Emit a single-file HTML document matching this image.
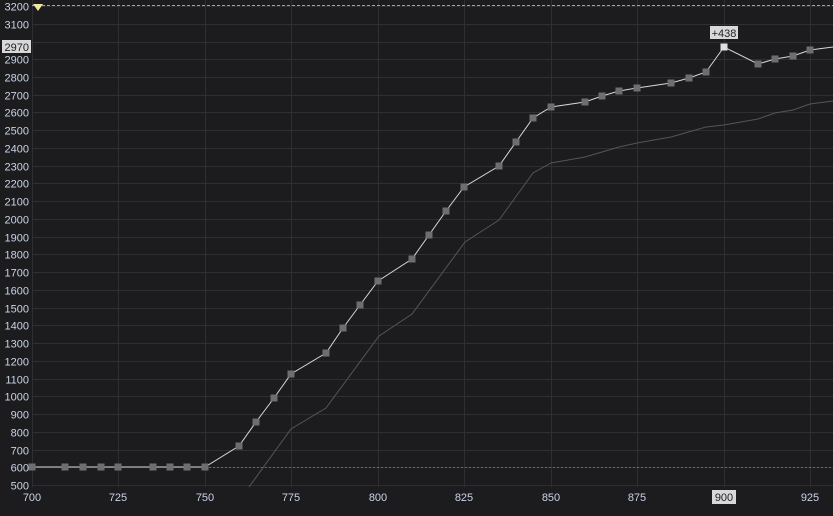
<!DOCTYPE html>
<html><head><style>
html,body{margin:0;padding:0;background:#1c1c1f;}
svg{display:block}
text{font-family:"Liberation Sans",sans-serif;font-size:11px;fill:#c9d3e6}
</style></head><body>
<svg width="833" height="516" viewBox="0 0 833 516">
<rect width="833" height="516" fill="#1c1c1f"/>
<g stroke="#2f2f33" stroke-width="1">
<line x1="32.5" y1="0" x2="32.5" y2="487"/>
<line x1="118.5" y1="0" x2="118.5" y2="487"/>
<line x1="205.5" y1="0" x2="205.5" y2="487"/>
<line x1="291.5" y1="0" x2="291.5" y2="487"/>
<line x1="378.5" y1="0" x2="378.5" y2="487"/>
<line x1="464.5" y1="0" x2="464.5" y2="487"/>
<line x1="551.5" y1="0" x2="551.5" y2="487"/>
<line x1="637.5" y1="0" x2="637.5" y2="487"/>
<line x1="724.5" y1="0" x2="724.5" y2="487"/>
<line x1="810.5" y1="0" x2="810.5" y2="487"/>
</g>
<g id="h" stroke="#2f2f33" stroke-width="1"></g>
<line x1="32" y1="5.5" x2="833" y2="5.5" stroke="#b8b020" stroke-dasharray="3,2"/>
<polygon points="33,4 43,4 38,11" fill="#f0e8a0"/>
<line x1="205" y1="467.5" x2="833" y2="467.5" stroke="#666" stroke-dasharray="2,2"/>
<polyline fill="none" stroke="#555558" stroke-width="1" points="249,487 291,429 326,408 379,336 412,314 465,242 499,220 533,173 551,163 585,157 619,147 637,143 671,137 706,127 724,125 758,119 775,113 793,110 810,104 833,101"/>
<polyline id="w" fill="none" stroke="#d8d8d8" stroke-width="1" points="32,467 65,467 83,467 101,467 118,467 153,467 170,467 187,467 205,467 239,446 256,422 274,398 291,374 326,353 343,328 360,305 378,281 412,259 429,235 446,211 464,187 499,166 516,142 533,118 551,107 585,102 602,96 619,91 637,88 671,83 689,78 706,72 724,47 758,64 775,59 793,56 810,50 833,47"/>
<g id="m" fill="#6e6e70"></g>
<g id="yl" text-anchor="end"></g>
<rect x="2" y="40" width="29" height="13" fill="#d8d8d8"/>
<text x="29" y="51" text-anchor="end" style="fill:#222">2970</text>
<rect x="710" y="26" width="28" height="13" fill="#d8d8d8"/>
<text x="724" y="37" text-anchor="middle" style="fill:#222">+438</text>
<g text-anchor="middle">
<text x="32" y="501">700</text><text x="118" y="501">725</text><text x="205" y="501">750</text>
<text x="291" y="501">775</text><text x="378" y="501">800</text><text x="464" y="501">825</text>
<text x="551" y="501">850</text><text x="637" y="501">875</text>
<rect x="712" y="490" width="24" height="14" fill="#d8d8d8"/>
<text x="724" y="501" style="fill:#222">900</text>
<text x="810" y="501">925</text>
</g>
<script>
var ns="http://www.w3.org/2000/svg",h=document.getElementById('h'),yl=document.getElementById('yl');
for(var k=0;k<=27;k++){var y=Math.round(485-k*17.74)+0.5;
var l=document.createElementNS(ns,'line');l.setAttribute('x1',32);l.setAttribute('x2',833);l.setAttribute('y1',y);l.setAttribute('y2',y);h.appendChild(l);
if(k==25)continue;
var t=document.createElementNS(ns,'text');t.setAttribute('x',29);t.setAttribute('y',y+4);t.textContent=500+k*100;yl.appendChild(t);}
var pts=document.getElementById('w').getAttribute('points').split(' '),m=document.getElementById('m');
pts.forEach(function(p,i){if(i==pts.length-1)return;var a=p.split(',');var r=document.createElementNS(ns,'rect');
r.setAttribute('x',a[0]-3.5);r.setAttribute('y',a[1]-3.5);r.setAttribute('width',7);r.setAttribute('height',7);
if(a[0]=='724')r.setAttribute('fill','#e0e0e0');m.appendChild(r);});
</script>
</svg>
</body></html>
